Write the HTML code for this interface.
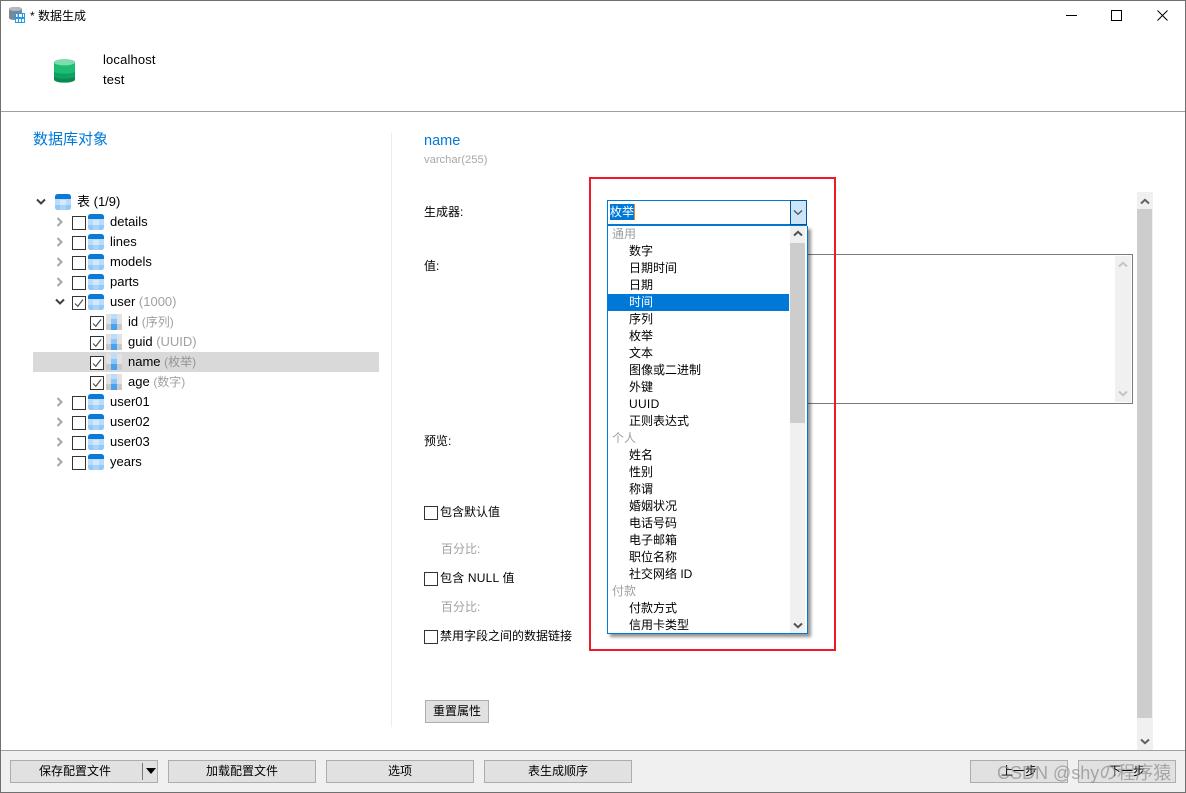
<!DOCTYPE html>
<html><head><meta charset="utf-8">
<style>
html,body{margin:0;padding:0;background:#fff;}
#w{position:relative;width:1186px;height:793px;overflow:hidden;background:#fff;font-family:"Liberation Sans","Noto Sans CJK SC",sans-serif;font-size:12px;color:#000;}
#w div,#w span.t,#w svg.a{position:absolute;}
.t{white-space:nowrap;line-height:16px;height:16px;}
.tr{font-size:13px;}
.g{color:#a0a0a0;}
.cb{width:12px;height:12px;border:1px solid #333;background:#fff;}
.btn{background:#e1e1e1;border:1px solid #adadad;box-sizing:border-box;height:23px;text-align:center;line-height:21px;font-size:12px;}
</style></head><body>
<div id="w">
<svg width="0" height="0" style="position:absolute">
<defs>
<symbol id="tb" viewBox="0 0 16 16">
<path d="M0 5H16V13Q16 16 13 16H3Q0 16 0 13Z" fill="#b9dcfb"/>
<rect x="5" y="6" width="6" height="5" fill="#d3e9fd"/>
<path d="M0 11H5V16H3Q0 16 0 13Z" fill="#92c9f9"/><path d="M11 11H16V13Q16 16 13 16H11Z" fill="#92c9f9"/>
<path d="M0 5V3Q0 0 3 0H13Q16 0 16 3V5Z" fill="#0a7ad6"/>
<rect x="5" y="11" width="6" height="5" fill="#a9d4fa"/>
</symbol>
<symbol id="col" viewBox="0 0 16 16">
<rect x="0" y="0" width="5" height="16" fill="#e2e2e2"/><rect x="11" y="0" width="5" height="16" fill="#e2e2e2"/>
<rect x="0" y="10" width="5" height="6" fill="#c9c9c9"/><rect x="11" y="10" width="5" height="6" fill="#c9c9c9"/>
<rect x="5" y="0" width="6" height="5" fill="#bcdcfb"/><rect x="5" y="5" width="6" height="5" fill="#8cc6f8"/><rect x="5" y="10" width="6" height="6" fill="#48a2f0"/>
</symbol>
<symbol id="ck" viewBox="0 0 14 14"><path d="M3 7.500L5.800 10.300L11 3.500" fill="none" stroke="#555" stroke-width="1.200"/></symbol>
<symbol id="cr" viewBox="0 0 8 10"><path d="M1.500 1L5.500 5L1.500 9" fill="none" stroke="#a6a6a6" stroke-width="2"/></symbol>
<symbol id="cd" viewBox="0 0 10 8"><path d="M1 1.500L5 5.500L9 1.500" fill="none" stroke="#404040" stroke-width="2"/></symbol>
<symbol id="up" viewBox="0 0 10 7"><path d="M1 5.500L5 1.800L9 5.500" fill="none" stroke="currentColor" stroke-width="2"/></symbol>
<symbol id="dn" viewBox="0 0 10 7"><path d="M1 1.500L5 5.200L9 1.500" fill="none" stroke="currentColor" stroke-width="2"/></symbol>
</defs>
</svg>

<!-- window frame -->
<div style="left:0;top:0;width:1184px;height:791px;border:1px solid #707070;z-index:50;pointer-events:none"></div>

<!-- title -->
<svg class="a" style="left:9px;top:7px" width="16" height="16" viewBox="0 0 16 16">
<path d="M0 2Q0 0 6.500 0Q13 0 13 2V11Q13 13 6.500 13Q0 13 0 11Z" fill="#7d8793"/><ellipse cx="6.500" cy="2" rx="6.500" ry="2" fill="#b3bac2"/>
<rect x="6" y="6" width="10" height="10" fill="#1f9be8"/>
<path d="M7 7H8.500V10H7ZM10 7H13V10H10ZM14 7H15V10H14ZM7 12H9V15H7ZM10 12H12V15H10ZM13 12H15V15H13Z" fill="#fff"/>
</svg>
<span class="t" style="left:30px;top:8px">* 数据生成</span>
<svg class="a" style="left:1066px;top:14px" width="11" height="2"><rect width="11" height="1" y="1" fill="#000"/></svg>
<div style="left:1111px;top:10px;width:9px;height:9px;border:1px solid #000"></div>
<svg class="a" style="left:1157px;top:10px" width="11" height="11"><path d="M.5 .5L10.500 10.500M10.500 .5L.5 10.500" stroke="#000" fill="none"/></svg>

<!-- header -->
<svg class="a" style="left:54px;top:59px" width="21" height="24" viewBox="0 0 21 24">
<path d="M0 3V20.500C0 24.700 21 24.700 21 20.500V3Z" fill="#0a8a50"/>
<path d="M0 3V17C0 20.500 21 20.500 21 17V3Z" fill="#10a060"/>
<path d="M0 3V12C0 15.500 21 15.500 21 12V3Z" fill="#1abd72"/>
<ellipse cx="10.500" cy="3.200" rx="10.500" ry="3.200" fill="#7fdcae"/>
</svg>
<span class="t" style="left:103px;top:52px;font-size:13px;letter-spacing:.15px">localhost</span>
<span class="t" style="left:103px;top:72px;font-size:13px;letter-spacing:.15px">test</span>
<div style="left:1px;top:111px;width:1184px;height:1px;background:#a0a0a0"></div>

<!-- left pane -->
<span class="t" style="left:33px;top:131px;font-size:15px;color:#0078d7;line-height:17px;height:17px">数据库对象</span>
<div style="left:391px;top:133px;width:1px;height:594px;background:#ededed"></div>
<div style="left:33px;top:352px;width:346px;height:20px;background:#d9d9d9"></div>

<svg class="a" style="left:36px;top:198px" width="10" height="8"><use href="#cd"/></svg>
<svg class="a" style="left:55px;top:194px" width="16" height="16"><use href="#tb"/></svg>
<span class="t tr" style="left:77px;top:194px">表 (1/9)</span>

<!-- rows -->
<svg class="a" style="left:56px;top:217px" width="8" height="10"><use href="#cr"/></svg><div class="cb" style="left:72px;top:216px"></div><svg class="a" style="left:88px;top:214px" width="16" height="16"><use href="#tb"/></svg><span class="t tr" style="left:110px;top:214px">details</span>
<svg class="a" style="left:56px;top:237px" width="8" height="10"><use href="#cr"/></svg><div class="cb" style="left:72px;top:236px"></div><svg class="a" style="left:88px;top:234px" width="16" height="16"><use href="#tb"/></svg><span class="t tr" style="left:110px;top:234px">lines</span>
<svg class="a" style="left:56px;top:257px" width="8" height="10"><use href="#cr"/></svg><div class="cb" style="left:72px;top:256px"></div><svg class="a" style="left:88px;top:254px" width="16" height="16"><use href="#tb"/></svg><span class="t tr" style="left:110px;top:254px">models</span>
<svg class="a" style="left:56px;top:277px" width="8" height="10"><use href="#cr"/></svg><div class="cb" style="left:72px;top:276px"></div><svg class="a" style="left:88px;top:274px" width="16" height="16"><use href="#tb"/></svg><span class="t tr" style="left:110px;top:274px">parts</span>
<svg class="a" style="left:55px;top:298px" width="10" height="8"><use href="#cd"/></svg><div class="cb" style="left:72px;top:296px"></div><svg class="a" style="left:72px;top:296px" width="14" height="14"><use href="#ck"/></svg><svg class="a" style="left:88px;top:294px" width="16" height="16"><use href="#tb"/></svg><span class="t tr" style="left:110px;top:294px">user <span class="g">(1000)</span></span>

<div class="cb" style="left:90px;top:316px"></div><svg class="a" style="left:90px;top:316px" width="14" height="14"><use href="#ck"/></svg><svg class="a" style="left:106px;top:314px" width="16" height="16"><use href="#col"/></svg><span class="t tr" style="left:128px;top:314px">id <span class="g" style="font-size:12px">(序列)</span></span>
<div class="cb" style="left:90px;top:336px"></div><svg class="a" style="left:90px;top:336px" width="14" height="14"><use href="#ck"/></svg><svg class="a" style="left:106px;top:334px" width="16" height="16"><use href="#col"/></svg><span class="t tr" style="left:128px;top:334px">guid <span class="g">(UUID)</span></span>
<div class="cb" style="left:90px;top:356px"></div><svg class="a" style="left:90px;top:356px" width="14" height="14"><use href="#ck"/></svg><svg class="a" style="left:106px;top:354px" width="16" height="16"><use href="#col"/></svg><span class="t tr" style="left:128px;top:354px">name <span class="g" style="font-size:12px;color:#969696">(枚举)</span></span>
<div class="cb" style="left:90px;top:376px"></div><svg class="a" style="left:90px;top:376px" width="14" height="14"><use href="#ck"/></svg><svg class="a" style="left:106px;top:374px" width="16" height="16"><use href="#col"/></svg><span class="t tr" style="left:128px;top:374px">age <span class="g" style="font-size:12px">(数字)</span></span>

<svg class="a" style="left:56px;top:397px" width="8" height="10"><use href="#cr"/></svg><div class="cb" style="left:72px;top:396px"></div><svg class="a" style="left:88px;top:394px" width="16" height="16"><use href="#tb"/></svg><span class="t tr" style="left:110px;top:394px">user01</span>
<svg class="a" style="left:56px;top:417px" width="8" height="10"><use href="#cr"/></svg><div class="cb" style="left:72px;top:416px"></div><svg class="a" style="left:88px;top:414px" width="16" height="16"><use href="#tb"/></svg><span class="t tr" style="left:110px;top:414px">user02</span>
<svg class="a" style="left:56px;top:437px" width="8" height="10"><use href="#cr"/></svg><div class="cb" style="left:72px;top:436px"></div><svg class="a" style="left:88px;top:434px" width="16" height="16"><use href="#tb"/></svg><span class="t tr" style="left:110px;top:434px">user03</span>
<svg class="a" style="left:56px;top:457px" width="8" height="10"><use href="#cr"/></svg><div class="cb" style="left:72px;top:456px"></div><svg class="a" style="left:88px;top:454px" width="16" height="16"><use href="#tb"/></svg><span class="t tr" style="left:110px;top:454px">years</span>

<!-- right pane -->
<span class="t" style="left:424px;top:133px;font-size:14.500px;color:#0078d7">name</span>
<span class="t" style="left:424px;top:152px;font-size:11.200px;color:#a8a8a8">varchar(255)</span>
<span class="t" style="left:424px;top:204px">生成器:</span>
<span class="t" style="left:424px;top:258px">值:</span>
<span class="t" style="left:424px;top:433px">预览:</span>

<div class="cb" style="left:424px;top:506px"></div><span class="t" style="left:440px;top:504px">包含默认值</span>
<span class="t" style="left:441px;top:541px;color:#a0a0a0">百分比:</span>
<div class="cb" style="left:424px;top:572px"></div><span class="t" style="left:440px;top:570px;letter-spacing:.2px">包含 NULL 值</span>
<span class="t" style="left:441px;top:599px;color:#a0a0a0">百分比:</span>
<div class="cb" style="left:424px;top:630px"></div><span class="t" style="left:440px;top:628px">禁用字段之间的数据链接</span>
<div class="btn" style="left:425px;top:700px;width:64px">重置属性</div>

<!-- value textarea -->
<div style="left:607px;top:254px;width:524px;height:148px;border:1px solid #7a7a7a;background:#fff"></div>
<div style="left:1115px;top:256px;width:16px;height:146px;background:#f0f0f0"></div>
<svg class="a" style="left:1118px;top:261px;color:#c4c4c4" width="10" height="7"><use href="#up"/></svg>
<svg class="a" style="left:1118px;top:390px;color:#c4c4c4" width="10" height="7"><use href="#dn"/></svg>

<!-- main scrollbar -->
<div style="left:1137px;top:192px;width:16px;height:558px;background:#f0f0f0"></div>
<div style="left:1137px;top:209px;width:15px;height:509px;background:#cdcdcd"></div>
<svg class="a" style="left:1140px;top:198px;color:#606060" width="10" height="7"><use href="#up"/></svg>
<svg class="a" style="left:1140px;top:738px;color:#606060" width="10" height="7"><use href="#dn"/></svg>

<!-- combobox -->
<div style="left:607px;top:200px;width:198px;height:23px;border:1px solid #0078d7;border-bottom:2px solid #0078d7;background:#fff"></div>
<div style="left:790px;top:200px;width:15px;height:23px;background:#cce4f7;border:1px solid #005499"></div>
<svg class="a" style="left:793px;top:209px;color:#505050" width="10" height="7" viewBox="0 0 10 7"><path d="M1 1.500L5 5.200L9 1.500" fill="none" stroke="#505050" stroke-width="1.300"/></svg>
<div style="left:610px;top:204px;width:24px;height:16px;background:#0078d7"></div>
<div style="left:634px;top:204px;width:1px;height:16px;background:#f08a24"></div>
<span class="t" style="left:610px;top:204px;color:#fff">枚举</span>

<!-- dropdown -->
<div style="left:607px;top:226px;width:199px;height:407px;border:1px solid #0078d7;border-top:0;background:#fff;box-shadow:3px 3px 3px rgba(0,0,0,.42)"></div>
<div style="left:790px;top:226px;width:15px;height:407px;background:#f0f0f0"></div>
<div style="left:790px;top:243px;width:15px;height:180px;background:#cdcdcd"></div>
<svg class="a" style="left:793px;top:230px;color:#505050" width="10" height="7"><use href="#up"/></svg>
<svg class="a" style="left:793px;top:622px;color:#505050" width="10" height="7"><use href="#dn"/></svg>
<div style="left:608px;top:294px;width:181px;height:17px;background:#0078d7"></div>

<span class="t" style="left:612px;top:226px;color:#a0a0a0">通用</span>
<span class="t" style="left:629px;top:243px">数字</span>
<span class="t" style="left:629px;top:260px">日期时间</span>
<span class="t" style="left:629px;top:277px">日期</span>
<span class="t" style="left:629px;top:294px;color:#fff">时间</span>
<span class="t" style="left:629px;top:311px">序列</span>
<span class="t" style="left:629px;top:328px">枚举</span>
<span class="t" style="left:629px;top:345px">文本</span>
<span class="t" style="left:629px;top:362px">图像或二进制</span>
<span class="t" style="left:629px;top:379px">外键</span>
<span class="t" style="left:629px;top:396px;letter-spacing:.3px">UUID</span>
<span class="t" style="left:629px;top:413px">正则表达式</span>
<span class="t" style="left:612px;top:430px;color:#a0a0a0">个人</span>
<span class="t" style="left:629px;top:447px">姓名</span>
<span class="t" style="left:629px;top:464px">性别</span>
<span class="t" style="left:629px;top:481px">称谓</span>
<span class="t" style="left:629px;top:498px">婚姻状况</span>
<span class="t" style="left:629px;top:515px">电话号码</span>
<span class="t" style="left:629px;top:532px">电子邮箱</span>
<span class="t" style="left:629px;top:549px">职位名称</span>
<span class="t" style="left:629px;top:566px">社交网络 ID</span>
<span class="t" style="left:612px;top:583px;color:#a0a0a0">付款</span>
<span class="t" style="left:629px;top:600px">付款方式</span>
<span class="t" style="left:629px;top:617px">信用卡类型</span>

<!-- red annotation -->
<div style="left:589px;top:177px;width:243px;height:470px;border:2px solid #ed1c24"></div>

<!-- footer -->
<div style="left:1px;top:750px;width:1184px;height:42px;background:#f0f0f0;border-top:1px solid #a0a0a0;box-sizing:border-box"></div>
<div class="btn" style="left:10px;top:760px;width:148px;padding-right:18px">保存配置文件</div>
<div style="left:142px;top:763px;width:1px;height:17px;background:#777"></div>
<svg class="a" style="left:146px;top:768px" width="10" height="6"><path d="M0 0H10L5 6Z" fill="#000"/></svg>
<div class="btn" style="left:168px;top:760px;width:148px">加载配置文件</div>
<div class="btn" style="left:326px;top:760px;width:148px">选项</div>
<div class="btn" style="left:484px;top:760px;width:148px">表生成顺序</div>
<div class="btn" style="left:970px;top:760px;width:98px">上一步</div>
<div class="btn" style="left:1078px;top:760px;width:98px">下一步</div>
<span class="t" style="left:997px;top:762px;font-size:18px;line-height:22px;height:22px;color:rgba(140,140,140,.7);z-index:20">CSDN @shyの程序猿</span>
</div>
</body></html>
